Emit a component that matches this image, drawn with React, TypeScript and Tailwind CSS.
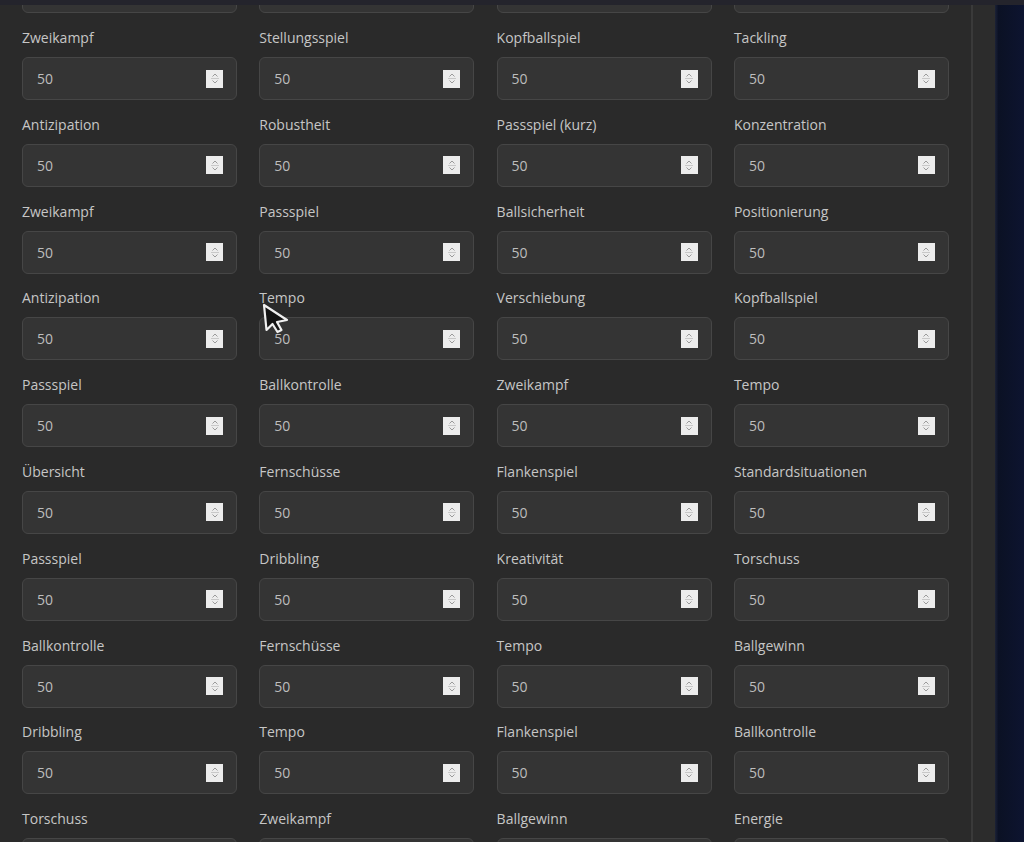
import React from 'react';

// Attribute grid rows as they appear in the scrolled editor
const ROWS: string[][] = [
  ['', '', '', ''],
  ['Zweikampf', 'Stellungsspiel', 'Kopfballspiel', 'Tackling'],
  ['Antizipation', 'Robustheit', 'Passspiel (kurz)', 'Konzentration'],
  ['Zweikampf', 'Passspiel', 'Ballsicherheit', 'Positionierung'],
  ['Antizipation', 'Tempo', 'Verschiebung', 'Kopfballspiel'],
  ['Passspiel', 'Ballkontrolle', 'Zweikampf', 'Tempo'],
  ['Übersicht', 'Fernschüsse', 'Flankenspiel', 'Standardsituationen'],
  ['Passspiel', 'Dribbling', 'Kreativität', 'Torschuss'],
  ['Ballkontrolle', 'Fernschüsse', 'Tempo', 'Ballgewinn'],
  ['Dribbling', 'Tempo', 'Flankenspiel', 'Ballkontrolle'],
  ['Torschuss', 'Zweikampf', 'Ballgewinn', 'Energie'],
];

function Spinner() {
  return (
    <div className="w-[17px] h-[18px] bg-[#ececec] flex flex-col items-center justify-center">
      <svg width="10" height="13" viewBox="0 0 10 13" fill="none">
        <path d="M2.5 4.5 L5 2 L7.5 4.5" stroke="#9a9a9a" strokeWidth="1" />
        <path d="M1 6.5 H9" stroke="#c8c8c8" strokeWidth="1" />
        <path d="M2.5 8.5 L5 11 L7.5 8.5" stroke="#9a9a9a" strokeWidth="1" />
      </svg>
    </div>
  );
}

function StatField({ label, hidden }: { label: string; hidden?: boolean }) {
  return (
    <div className="flex flex-col">
      <div className="h-[20px] leading-[20px] text-[14px] text-[#c6c6c6] mb-[9px] whitespace-nowrap">{label}</div>
      <div className="h-[43px] rounded-[6px] bg-[#343434] border border-[#464646] flex items-center justify-between pl-[14px] pr-[13px]">
        {!hidden && <span className="text-[14px] text-[#bdbdbd]">50</span>}
        {!hidden && <Spinner />}
      </div>
    </div>
  );
}

export default function App() {
  const last = ROWS.length - 1;
  return (
    <div
      className="relative w-[1024px] h-[842px] overflow-hidden bg-[#0b1124] flex flex-col"
      style={{ fontFamily: '"Open Sans", "Noto Sans", sans-serif' }}
    >
      {/* top bar */}
      <div className="h-[5px] bg-[#24242c] shrink-0 z-10" />
      <div className="flex flex-1 min-h-0">
        {/* main panel */}
        <div className="w-[971px] bg-[#2a2a2a] overflow-hidden">
          <div className="mt-[-63.8px] pl-[22px] grid grid-cols-[215px_215px_215px_215px] gap-x-[22.3px] gap-y-[14.8px]">
            {ROWS.map((row, r) =>
              row.map((label, c) => (
                <StatField key={`${r}-${c}`} label={label} hidden={r === 0 || r === last} />
              ))
            )}
          </div>
        </div>
        {/* scrollbar / side strip */}
        <div className="w-[2px] bg-[#3a3a3a]" />
        <div className="w-[22px] bg-[#2c2c2c]" />
        <div className="w-[3px] bg-gradient-to-r from-[#1c2236] to-[#0d1328]" />
        <div className="flex-1 bg-gradient-to-r from-[#0b1124] to-[#0d1430]" />
      </div>
      {/* mouse cursor */}
      <svg className="absolute left-[261px] top-[302px]" width="30" height="33" viewBox="0 0 30 33">
        <path d="M3 3 L5.5 28 L11.5 22 L16.5 30 L20.5 28 L16 20 L26 18 Z" fill="#141414" stroke="#f0f0f0" strokeWidth="2.2" strokeLinejoin="round" />
      </svg>
    </div>
  );
}
